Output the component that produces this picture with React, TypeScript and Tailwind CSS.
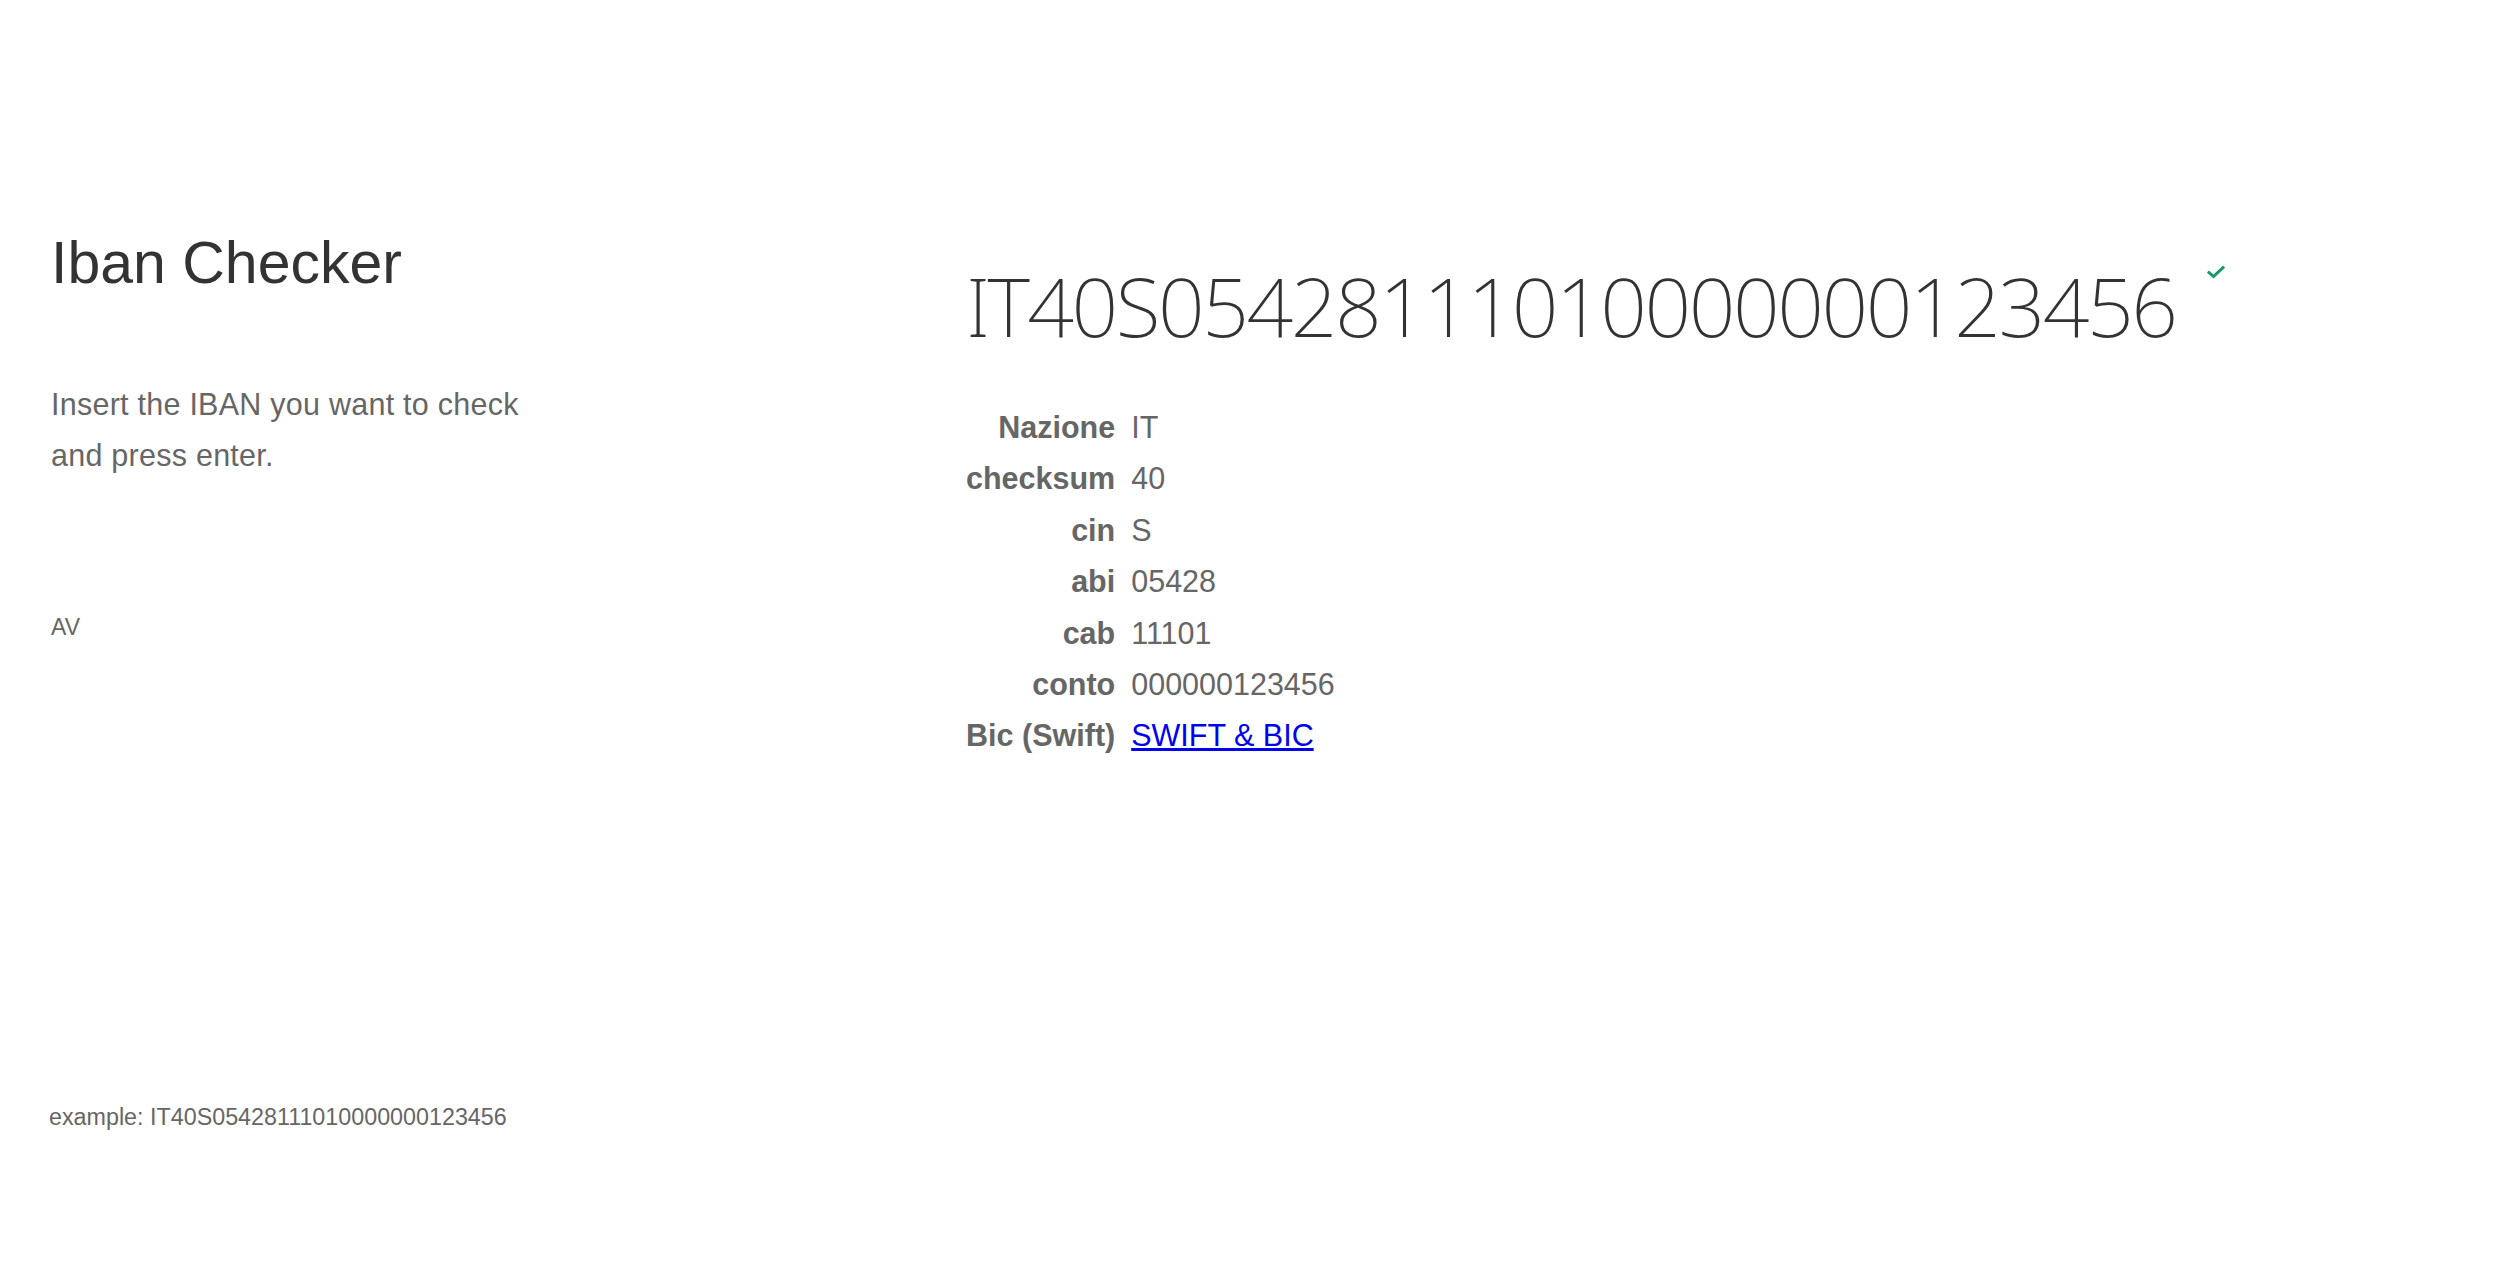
const IBAN = "IT40S05428111010000000123456";

const FIELDS: { label: string; value: string; link?: boolean }[] = [
  { label: "Nazione", value: "IT" },
  { label: "checksum", value: "40" },
  { label: "cin", value: "S" },
  { label: "abi", value: "05428" },
  { label: "cab", value: "11101" },
  { label: "conto", value: "000000123456" },
  { label: "Bic (Swift)", value: "SWIFT & BIC", link: true },
];

function ValidMark() {
  return (
    <svg
      width="18"
      height="14"
      viewBox="0 0 18 14"
      className="ml-[32px] mt-[1px] shrink-0"
      aria-label="valid"
    >
      <path
        d="M2 7.5 L6.5 11.5 L16 2.5"
        fill="none"
        stroke="#16996a"
        strokeWidth="3"
        strokeLinecap="square"
      />
    </svg>
  );
}

export default function App() {
  return (
    <div className="min-h-screen bg-white font-['Liberation_Sans',Arial,sans-serif]">
      <div className="flex pl-[51px]">
        {/* left: intro */}
        <div className="w-[915px] shrink-0 pt-[231px]">
          <h1 className="text-[59px] font-normal leading-[64px] text-[#333]">
            Iban Checker
          </h1>
          <p className="mt-[84px] max-w-[500px] text-[30.5px] leading-[51px] tracking-[0.25px] text-[#666]">
            Insert the IBAN you want to check and press enter.
          </p>
          <div className="mt-[131px] text-[23px] leading-[30px] text-[#666]">AV</div>
          <div className="-ml-[2px] mt-[460px] text-[23.3px] leading-[30px] text-[#666]">
            example: {IBAN}
          </div>
        </div>

        {/* right: result */}
        <div className="flex-1 pt-[264px]">
          <div className="flex items-start">
            <span className="font-['Noto_Sans','Open_Sans',sans-serif] text-[82px] font-extralight leading-[82px] tracking-[-2.5px] text-[#333]">
              {IBAN}
            </span>
            <ValidMark />
          </div>

          <dl className="mt-[56px] grid grid-cols-[auto_auto] justify-start gap-x-4 text-[30.5px] leading-[51.4px] text-[#666]">
            {FIELDS.map((f) => (
              <div key={f.label} className="contents">
                <dt className="text-right font-bold">{f.label}</dt>
                <dd>
                  {f.link ? (
                    <a href="#" className="text-[#0000ee] underline">
                      {f.value}
                    </a>
                  ) : (
                    f.value
                  )}
                </dd>
              </div>
            ))}
          </dl>
        </div>
      </div>
    </div>
  );
}
